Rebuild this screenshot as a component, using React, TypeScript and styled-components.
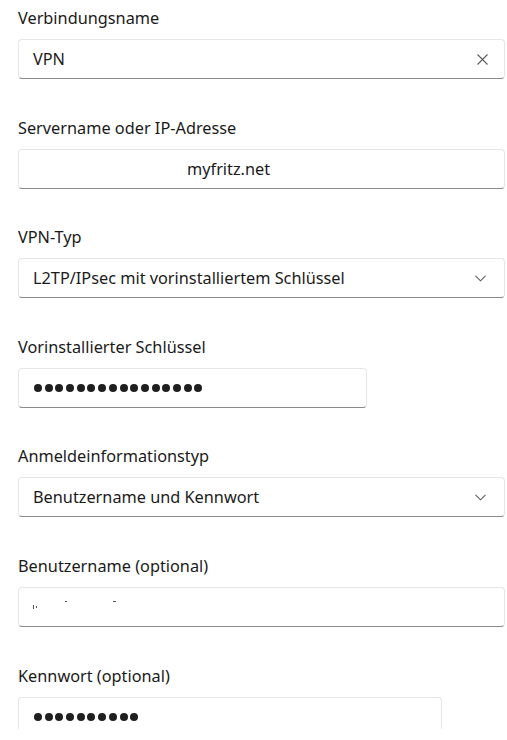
import React from "react";
import styled, { createGlobalStyle } from "styled-components";

const GlobalStyle = createGlobalStyle`
  html, body {
    margin: 0;
    padding: 0;
    background: #ffffff;
  }
  body {
    font-family: "Segoe UI", "Noto Sans", "Open Sans", sans-serif;
    color: #1b1b1b;
  }
`;

// the captured window ends a few pixels above the bottom of the shot
const Page = styled.div`
  width: 507px;
  height: 729px;
  overflow: hidden;
  box-sizing: border-box;
  padding: 7px 2px 0 18px;
  display: flex;
  flex-direction: column;
  gap: 37.6px;
`;

const Field = styled.div`
  display: flex;
  flex-direction: column;
  gap: 10px;
  flex: none;
`;

const Label = styled.div`
  font-size: 16.3px;
  line-height: 22px;
  color: #1a1a1a;
`;

const Box = styled.div<{ $width?: number }>`
  width: ${(p) => (p.$width ? `${p.$width}px` : "487px")};
  height: 40px;
  flex: none;
  box-sizing: border-box;
  background: #ffffff;
  border: 1px solid #e6e6e6;
  border-bottom: 1px solid #8a8a8a;
  border-radius: 4px;
  display: flex;
  align-items: center;
  padding: 0 16px 0 14px;
`;

const Value = styled.span<{ $indent?: number }>`
  flex: 1;
  font-size: 16.3px;
  color: #1b1b1b;
  padding-left: ${(p) => p.$indent ?? 0}px;
  white-space: nowrap;
`;

const Dots = styled.div`
  flex: 1;
  display: flex;
  gap: 2.7px;
  padding-left: 1px;
`;

const Dot = styled.span`
  width: 8px;
  height: 8px;
  border-radius: 50%;
  background: #1f1f1f;
`;

const Specks = styled.div`
  flex: 1;
  position: relative;
  height: 20px;
`;

const Speck = styled.span<{ $x: number; $y: number; $w: number; $h: number }>`
  position: absolute;
  left: ${(p) => p.$x}px;
  top: ${(p) => p.$y}px;
  width: ${(p) => p.$w}px;
  height: ${(p) => p.$h}px;
  background: #555;
`;

const Icon = styled.svg`
  flex: none;
  color: #5c5c5c;
`;

const ClearIcon = () => (
  <Icon width="11" height="11" viewBox="0 0 11 11">
    <path d="M0.5 0.5 L10.5 10.5 M10.5 0.5 L0.5 10.5" stroke="currentColor" strokeWidth="1.1" fill="none" />
  </Icon>
);

const Chevron = () => (
  <Icon width="11" height="7" viewBox="0 0 11 7" style={{ marginRight: 2 }}>
    <path d="M0.5 0.8 L5.5 5.8 L10.5 0.8" stroke="currentColor" strokeWidth="1.1" fill="none" />
  </Icon>
);

const Password = ({ count }: { count: number }) => (
  <Dots>
    {Array.from({ length: count }).map((_, i) => (
      <Dot key={i} />
    ))}
  </Dots>
);

function App() {
  return (
    <>
      <GlobalStyle />
      <Page>
        <Field>
          <Label>Verbindungsname</Label>
          <Box>
            <Value>VPN</Value>
            <ClearIcon />
          </Box>
        </Field>
        <Field>
          <Label>Servername oder IP-Adresse</Label>
          <Box>
            <Value $indent={154}>myfritz.net</Value>
          </Box>
        </Field>
        <Field>
          <Label>VPN-Typ</Label>
          <Box>
            <Value>L2TP/IPsec mit vorinstalliertem Schlüssel</Value>
            <Chevron />
          </Box>
        </Field>
        <Field>
          <Label>Vorinstallierter Schlüssel</Label>
          <Box $width={349}>
            <Password count={16} />
          </Box>
        </Field>
        <Field>
          <Label>Anmeldeinformationstyp</Label>
          <Box>
            <Value>Benutzername und Kennwort</Value>
            <Chevron />
          </Box>
        </Field>
        <Field>
          <Label>Benutzername (optional)</Label>
          <Box>
            <Specks>
              <Speck $x={0} $y={8} $w={1} $h={4} />
              <Speck $x={3} $y={9} $w={1} $h={2} />
              <Speck $x={32} $y={4} $w={2} $h={1} />
              <Speck $x={80} $y={4} $w={3} $h={1} />
            </Specks>
          </Box>
        </Field>
        <Field>
          <Label>Kennwort (optional)</Label>
          <Box $width={424}>
            <Password count={10} />
          </Box>
        </Field>
      </Page>
    </>
  );
}

export default App;
